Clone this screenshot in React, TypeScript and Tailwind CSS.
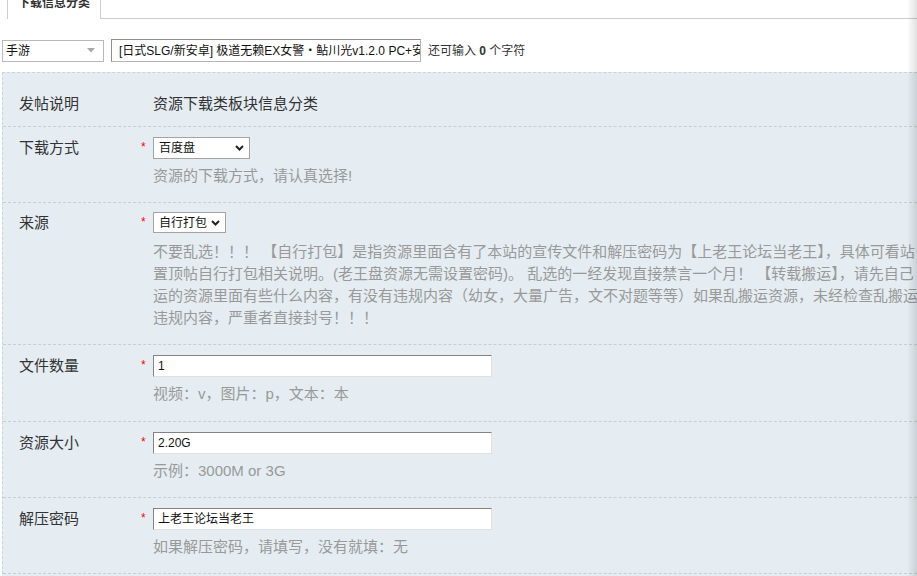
import type { ReactNode } from 'react';

const inputBorder =
  'border border-t-[#848484] border-l-[#848484] border-r-[#e0e0e0] border-b-[#e0e0e0] bg-white';

function Chevron() {
  return (
    <svg width="9" height="6" viewBox="0 0 9 6" className="shrink-0">
      <path d="M1 1 L4.5 4.5 L8 1" fill="none" stroke="#222" strokeWidth="2" />
    </svg>
  );
}

function Select({ value, width, height = 22 }: { value: string; width: number; height?: number }) {
  return (
    <div
      className="flex items-center justify-between border border-[#a3a3a3] bg-white pl-[5px] pr-[5px] text-[12px] text-[#111]"
      style={{ width, height }}
    >
      <span>{value}</span>
      <Chevron />
    </div>
  );
}

function TextInput({ value }: { value: string }) {
  return (
    <div className={`flex h-[22px] w-[339px] items-center pl-[4px] text-[12px] text-[#111] ${inputBorder}`}>
      {value}
    </div>
  );
}

function Row({
  label,
  required = false,
  children,
  hint,
  className = 'pt-[10px] pb-[15px]',
}: {
  label: string;
  required?: boolean;
  children: ReactNode;
  hint?: ReactNode;
  className?: string;
}) {
  return (
    <div className={`flex border-b border-dashed border-[#cdcdcd] pl-[16px] ${className}`}>
      <div className="w-[120px] shrink-0 text-[15px] leading-[22px] text-[#333]">{label}</div>
      <div className="w-[14px] shrink-0 pl-[2px] text-[12px] leading-[20px] text-[#f00]">{required ? '*' : ''}</div>
      <div className="min-w-0 flex-1">
        {children}
        {hint}
      </div>
    </div>
  );
}

function Hint({ children, mt = 'mt-[6px]' }: { children: ReactNode; mt?: string }) {
  return <div className={`${mt} text-[15px] leading-[22px] text-[#999]`}>{children}</div>;
}

export default function App() {
  const sourceLines = [
    '不要乱选！！！ 【自行打包】是指资源里面含有了本站的宣传文件和解压密码为【上老王论坛当老王】，具体可看站',
    '置顶帖自行打包相关说明。(老王盘资源无需设置密码)。 乱选的一经发现直接禁言一个月！ 【转载搬运】，请先自己',
    '运的资源里面有些什么内容，有没有违规内容（幼女，大量广告，文不对题等等）如果乱搬运资源，未经检查乱搬运',
    '违规内容，严重者直接封号！！！',
  ];

  return (
    <div className="relative h-[576px] w-[917px] overflow-hidden bg-white font-['Liberation_Sans','Noto_Sans_CJK_SC',sans-serif] text-[#333]">
      {/* tab bar */}
      <div className="flex h-[19px]">
        <div className="w-[7px] shrink-0" />
        <div className="h-[19px] w-[94px] shrink-0 overflow-hidden border-x border-[#cdcdcd] bg-white text-center">
          <div className="mt-[-6px] text-[12px] font-bold leading-[18px] text-[#333]">下载信息分类</div>
        </div>
        <div className="flex-1 border-b border-[#cdcdcd]" />
      </div>

      {/* title row */}
      <div className="mt-[20px] flex h-[23px] items-center pl-[2px]">
        <div className="flex h-[22px] w-[102px] items-center justify-between border border-[#b8b8b8] bg-white pl-[3px] pr-[8px] text-[12px] text-[#111]">
          <span>手游</span>
          <svg width="8" height="5" viewBox="0 0 8 5">
            <path d="M0 0 L8 0 L4 4.5 Z" fill="#a8a8a8" />
          </svg>
        </div>
        <div className="ml-[7px] flex h-[23px] w-[310px] items-center border border-t-[#8f8f8f] border-l-[#8f8f8f] border-r-[#b5b5b5] border-b-[#b5b5b5] bg-white pl-[7px] text-[12px] text-[#111]">
          <span className="block w-full overflow-hidden whitespace-nowrap">
            [日式SLG/新安卓] 极道无赖EX女警・鲇川光v1.2.0 PC+安卓
          </span>
        </div>
        <div className="ml-[7px] text-[12px] text-[#333]">
          还可输入 <b className="font-bold">0</b> 个字符
        </div>
      </div>

      {/* form panel */}
      <div className="ml-[2px] mt-[10px] border-l border-t border-dashed border-[#c2d5e3] bg-[#e5edf2]">
        <Row label="发帖说明" className="pt-[20px] pb-[11px]">
          <div className="text-[15px] leading-[22px] text-[#333]">资源下载类板块信息分类</div>
        </Row>

        <Row label="下载方式" required hint={<Hint>资源的下载方式，请认真选择!</Hint>}>
          <Select value="百度盘" width={97} />
        </Row>

        <Row
          label="来源"
          required
          className="pt-[9px] pb-[15px]"
          hint={
            <Hint mt="mt-[8px]">
              {sourceLines.map((l) => (
                <div key={l} className="whitespace-pre">
                  {l}
                </div>
              ))}
            </Hint>
          }
        >
          <Select value="自行打包" width={73} height={21} />
        </Row>

        <Row label="文件数量" required className="pt-[10px] pb-[16px]" hint={<Hint>视频：v，图片：p，文本：本</Hint>}>
          <TextInput value="1" />
        </Row>

        <Row label="资源大小" required hint={<Hint>示例：3000M or 3G</Hint>}>
          <TextInput value="2.20G" />
        </Row>

        <Row label="解压密码" required hint={<Hint>如果解压密码，请填写，没有就填：无</Hint>}>
          <TextInput value="上老王论坛当老王" />
        </Row>

        <div className="h-[40px]" />
      </div>

      {/* right edge shade */}
      <div className="pointer-events-none absolute right-0 top-0 h-full w-[10px] bg-linear-to-r from-transparent to-black/[0.12]" />
    </div>
  );
}
